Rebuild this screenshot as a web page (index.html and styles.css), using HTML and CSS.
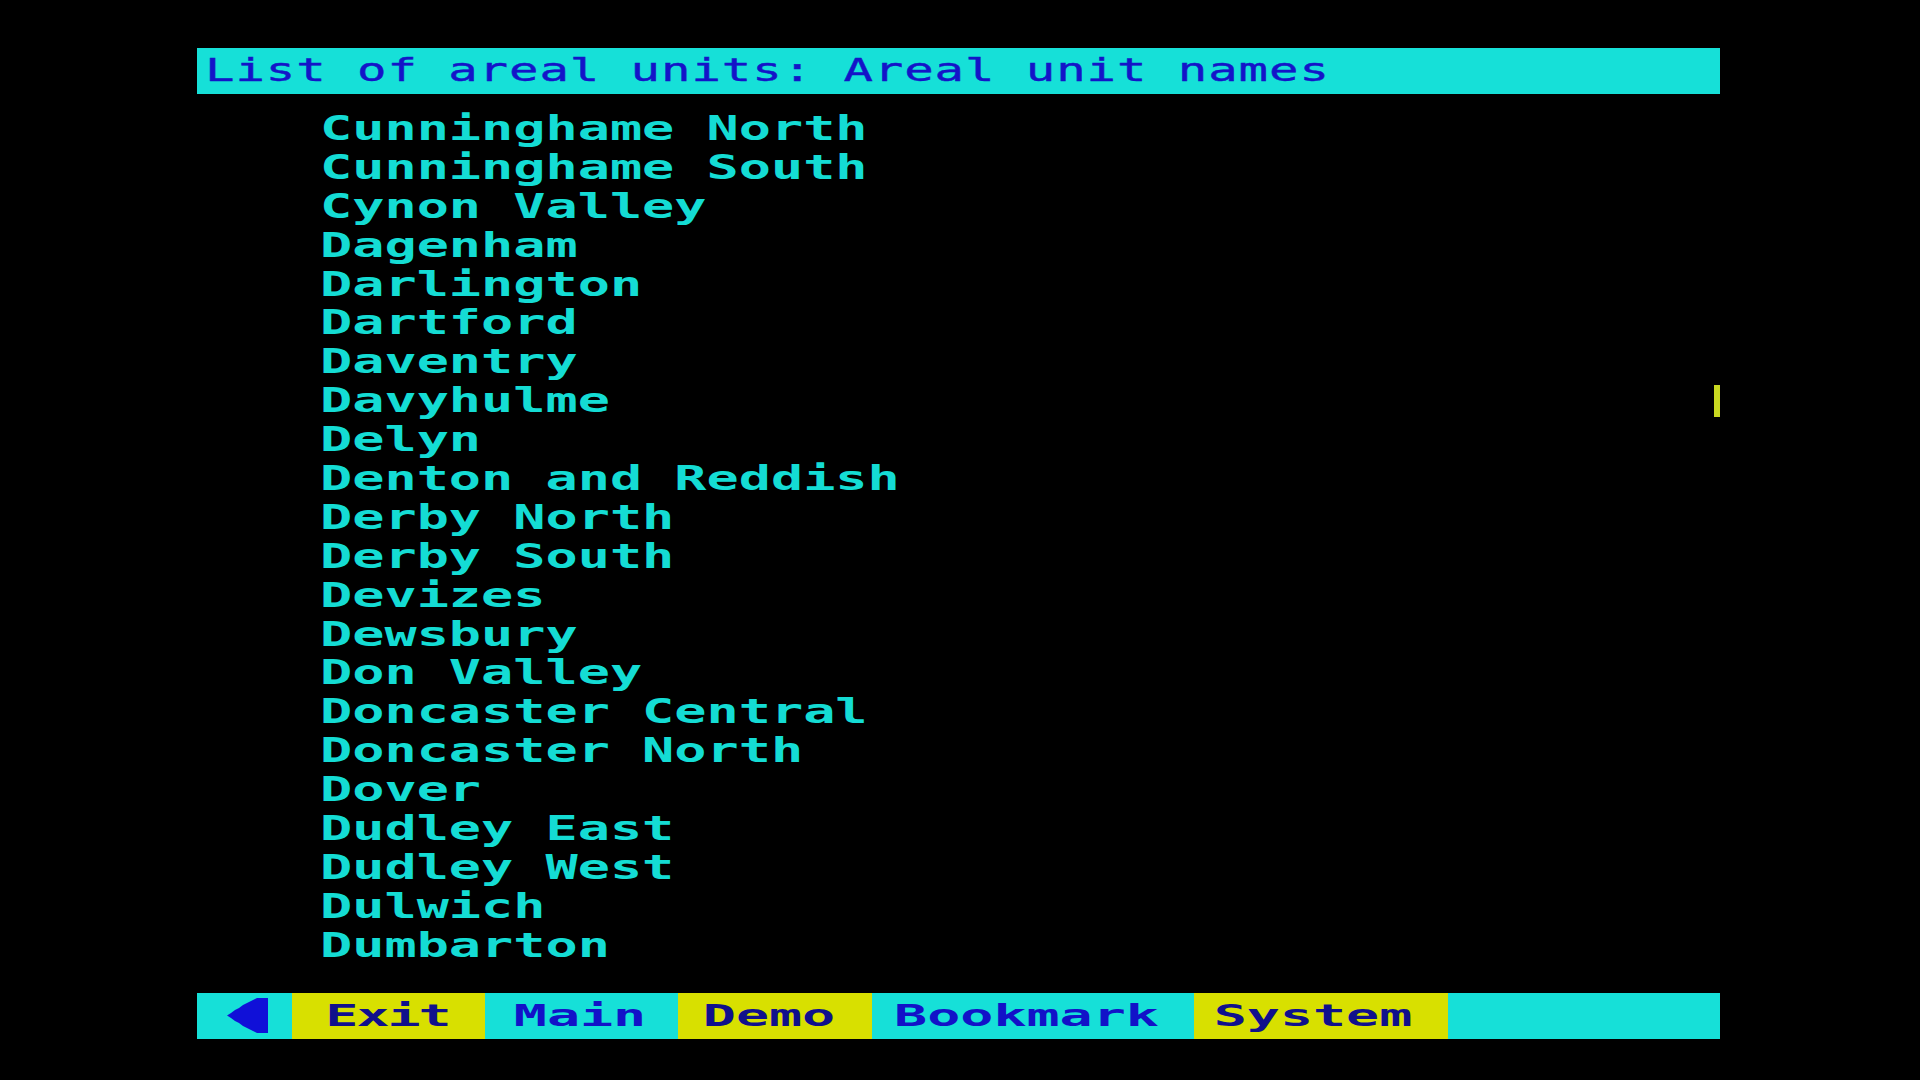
FILE: index.html
```html
<!DOCTYPE html>
<html lang="en">
<head>
<meta charset="utf-8">
<title>List of areal units</title>
<link rel="stylesheet" href="styles.css">
</head>
<body>
<div class="screen">
  <div class="titlebar"><span class="title-text">List of areal units: Areal unit names</span></div>
  <div class="list">
    <div class="row"><span>Cunninghame North</span></div>
    <div class="row"><span>Cunninghame South</span></div>
    <div class="row"><span>Cynon Valley</span></div>
    <div class="row"><span>Dagenham</span></div>
    <div class="row"><span>Darlington</span></div>
    <div class="row"><span>Dartford</span></div>
    <div class="row"><span>Daventry</span></div>
    <div class="row"><span>Davyhulme</span><i class="cursor"></i></div>
    <div class="row"><span>Delyn</span></div>
    <div class="row"><span>Denton and Reddish</span></div>
    <div class="row"><span>Derby North</span></div>
    <div class="row"><span>Derby South</span></div>
    <div class="row"><span>Devizes</span></div>
    <div class="row"><span>Dewsbury</span></div>
    <div class="row"><span>Don Valley</span></div>
    <div class="row"><span>Doncaster Central</span></div>
    <div class="row"><span>Doncaster North</span></div>
    <div class="row"><span>Dover</span></div>
    <div class="row"><span>Dudley East</span></div>
    <div class="row"><span>Dudley West</span></div>
    <div class="row"><span>Dulwich</span></div>
    <div class="row"><span>Dumbarton</span></div>
  </div>
  <div class="menubar">
    <div class="seg cyan seg-back">
      <svg class="arrow" width="41" height="35" viewBox="0 0 41 35"><path d="M0 17.5 L4 15 L8 12 L12 10 L16 7 L20 5 L24 3 L30 0 L41 0 L41 35 L30 35 L24 32 L20 30 L16 28 L12 25 L8 23 L4 20 Z" fill="#1010d8"/></svg>
    </div>
    <div class="seg yellow seg-exit"><span class="lbl">Exit</span></div>
    <div class="seg cyan seg-main"><span class="lbl">Main</span></div>
    <div class="seg yellow seg-demo"><span class="lbl">Demo</span></div>
    <div class="seg cyan seg-bookmark"><span class="lbl">Bookmark</span></div>
    <div class="seg yellow seg-system"><span class="lbl">System</span></div>
    <div class="seg cyan seg-fill"></div>
  </div>
</div>
</body>
</html>
```
FILE: styles.css
```css
html, body {
  margin: 0;
  padding: 0;
  background: #000;
  width: 1920px;
  height: 1080px;
  overflow: hidden;
}

.screen {
  display: flex;
  flex-direction: column;
  width: 1523px;
  margin-left: 197px;
  padding-top: 48px;
}

.titlebar {
  height: 46px;
  background: #16e0d8;
  display: flex;
  align-items: center;
  padding-left: 8px;
  overflow: hidden;
}

.title-text {
  font-family: "DejaVu Sans Mono", "Liberation Mono", monospace;
  font-size: 49px;
  line-height: 46px;
  color: #1414c8;
  white-space: pre;
  display: inline-block;
  transform: scaleY(0.65);
  transform-origin: 50% 46%;
  letter-spacing: 0.9px;
  -webkit-text-stroke: 0.6px #1414c8;
}

.list {
  margin-top: 16px;
  padding-left: 123px;
  display: flex;
  flex-direction: column;
  position: relative;
}

.row {
  height: 38.9px;
  line-height: 38.9px;
  font-family: "DejaVu Sans Mono", "Liberation Mono", monospace;
  font-weight: bold;
  font-size: 53.5px;
  color: #14dcd4;
  white-space: pre;
}

.row span {
  display: inline-block;
  transform: scaleY(0.62);
  transform-origin: 50% 50%;
}

.cursor {
  position: absolute;
  left: 1517px;
  width: 6px;
  height: 32px;
  margin-top: 3px;
  background: #c8d820;
}

.menubar {
  margin-top: 27px;
  height: 46px;
  display: flex;
}

.seg {
  height: 46px;
  display: flex;
  align-items: center;
  justify-content: center;
  flex: none;
}

.cyan { background: #16e0d8; }
.yellow { background: #d8e000; }

.seg-back { width: 95px; justify-content: flex-start; }
.seg-exit { width: 193px; }
.seg-main { width: 193px; }
.seg-demo { width: 194px; }
.seg-bookmark { width: 322px; }
.seg-system { width: 254px; }
.seg-fill { flex: 1; }

.arrow { margin-left: 30px; display: block; }

.lbl {
  font-family: "DejaVu Sans Mono", "Liberation Mono", monospace;
  font-weight: bold;
  font-size: 55px;
  line-height: 46px;
  white-space: pre;
  display: inline-block;
  transform: scaleY(0.56);
  transform-origin: 50% 48%;
  margin-right: 8px;
}

.seg-exit .lbl { margin-right: 2px; letter-spacing: -2px; }
.seg-main .lbl { margin-right: 3px; }
.seg-demo .lbl { margin-right: 12px; }
.seg-bookmark .lbl { margin-right: 13px; }
.seg-system .lbl { margin-right: 16px; }

.cyan .lbl { color: #1212c8; }
.yellow .lbl { color: #10108c; }
```
